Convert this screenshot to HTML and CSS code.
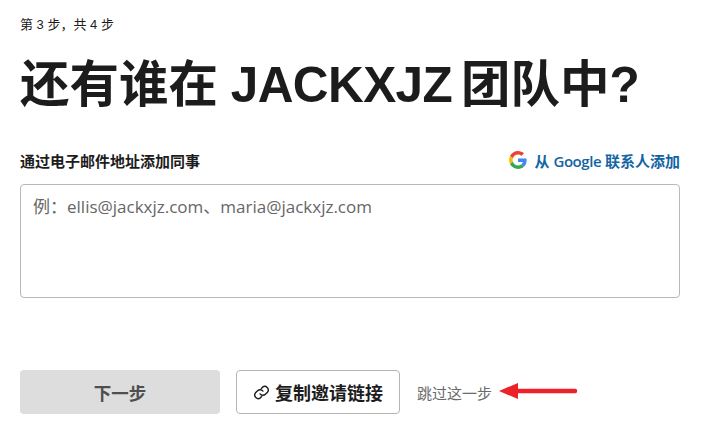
FILE: index.html
```html
<!DOCTYPE html>
<html lang="zh-CN">
<head>
    <meta charset="UTF-8">
    <meta name="viewport" content="width=device-width, initial-scale=1.0">
    <title>还有谁在 JACKXJZ 团队中?</title>
    <link rel="stylesheet" href="styles.css">
</head>
<body>
    <div class="page">
        <div class="step">第 3 步，共 4 步</div>
        <h1>还有谁在 <span class="team">JACKXJZ</span> 团队中?</h1>

        <div class="label-row">
            <label for="emails">通过电子邮件地址添加同事</label>
            <a class="google-link" href="#">
                <svg class="google-icon" viewBox="0 0 48 48" width="18" height="18">
                    <path fill="#ea4335" d="M24 9.500c3.500 0 6.700 1.300 9.100 3.500l6.800-6.800C35.800 2.400 30.200 0 24 0 14.600 0 6.500 5.400 2.600 13.200l7.900 6.200C12.400 13.700 17.700 9.500 24 9.500z"/>
                    <path fill="#4285f4" d="M47 24.500c0-1.600-.1-3.100-.4-4.500H24v9h12.900c-.6 3-2.300 5.500-4.800 7.200l7.700 6C44.300 37.900 47 31.800 47 24.500z"/>
                    <path fill="#fbbc05" d="M10.500 28.600c-.5-1.400-.8-3-.8-4.600s.3-3.200.8-4.600l-7.900-6.200C.9 16.500 0 20.100 0 24s.9 7.500 2.600 10.800l7.900-6.200z"/>
                    <path fill="#34a853" d="M24 48c6.500 0 11.900-2.100 15.800-5.800l-7.700-6c-2.100 1.400-4.900 2.300-8.100 2.300-6.300 0-11.600-4.200-13.500-9.900l-7.900 6.200C6.500 42.600 14.600 48 24 48z"/>
                </svg>
                <span>从 <span class="google-word">Google</span> 联系人添加</span>
            </a>
        </div>
        <textarea id="emails" placeholder="例：ellis@jackxjz.com、maria@jackxjz.com"></textarea>

        <div class="actions">
            <button class="next-btn" disabled>下一步</button>
            <button class="copy-btn">
                <svg viewBox="0 0 24 24" width="17" height="17" fill="none" stroke="#1d1c1d" stroke-width="2" stroke-linecap="round" stroke-linejoin="round">
                    <path d="M10 14a5 5 0 0 0 7.500.5l3-3a5 5 0 0 0-7-7l-1.700 1.700"/>
                    <path d="M14 10a5 5 0 0 0-7.500-.5l-3 3a5 5 0 0 0 7 7l1.700-1.700"/>
                </svg>
                <span>复制邀请链接</span>
            </button>
            <a class="skip" href="#">跳过这一步</a>
            <svg class="arrow" viewBox="0 0 80 20" width="80" height="20">
                <path d="M20 10H77" stroke="#ed2129" stroke-width="4.500" stroke-linecap="round"/>
                <path d="M1 10L20 2V18Z" fill="#ed2129"/>
            </svg>
        </div>
    </div>
</body>
</html>
```

FILE: styles.css
```css
body {
    margin: 0;
    background-color: #fff;
    color: #1d1c1d;
    font-family: "Open Sans", "Noto Sans CJK SC", sans-serif;
}
.page {
    width: 660px;
    padding: 17px 0 0 20px;
}
.step {
    font-family: "Liberation Sans", "Noto Sans CJK SC", sans-serif;
    font-size: 13px;
    line-height: 16px;
}
h1 {
    margin: 22px 0 0;
    font-family: "Liberation Sans", "Noto Sans CJK SC", sans-serif;
    font-size: 49.500px;
    font-weight: 700;
    line-height: 60px;
    word-spacing: -4px;
    white-space: nowrap;
}
.team {
    margin: 0 -1px 0 3px;
    letter-spacing: -0.6px;
}
.label-row {
    display: flex;
    justify-content: space-between;
    align-items: center;
    margin-top: 32px;
    height: 26px;
}
.label-row label {
    font-size: 15px;
    font-weight: 700;
}
.google-link {
    display: flex;
    align-items: center;
    gap: 8px;
    color: #1264a3;
    font-size: 15px;
    font-weight: 700;
    text-decoration: none;
}
.google-word {
    font-weight: 600;
    letter-spacing: -0.45px;
}
.google-icon {
    display: block;
}
textarea {
    display: block;
    box-sizing: border-box;
    width: 660px;
    height: 114px;
    margin-top: 11px;
    padding: 10px 12px;
    border: 1px solid #b8b8b8;
    border-radius: 4px;
    font-family: "Open Sans", "Noto Sans CJK SC", sans-serif;
    font-size: 17px;
    line-height: 24px;
    resize: none;
}
textarea::placeholder {
    color: #666666;
    opacity: 1;
}
.actions {
    position: relative;
    display: flex;
    align-items: center;
    margin-top: 72px;
    height: 44px;
}
.actions button {
    box-sizing: border-box;
    height: 44px;
    font-family: inherit;
    font-weight: 700;
    border-radius: 4px;
}
.next-btn {
    width: 200px;
    border: none;
    background-color: #dddddd;
    color: #4f4f4f;
    font-size: 17.500px;
}
.copy-btn {
    display: flex;
    align-items: center;
    justify-content: center;
    gap: 5px;
    width: 164px;
    margin-left: 16px;
    border: 1px solid #b5b5b5;
    background-color: #fff;
    color: #1d1c1d;
    font-size: 18px;
}
.skip {
    margin-left: 17px;
    color: #6b6b6b;
    font-size: 15px;
    text-decoration: none;
}
.arrow {
    position: absolute;
    left: 478px;
    top: 11px;
}
```
